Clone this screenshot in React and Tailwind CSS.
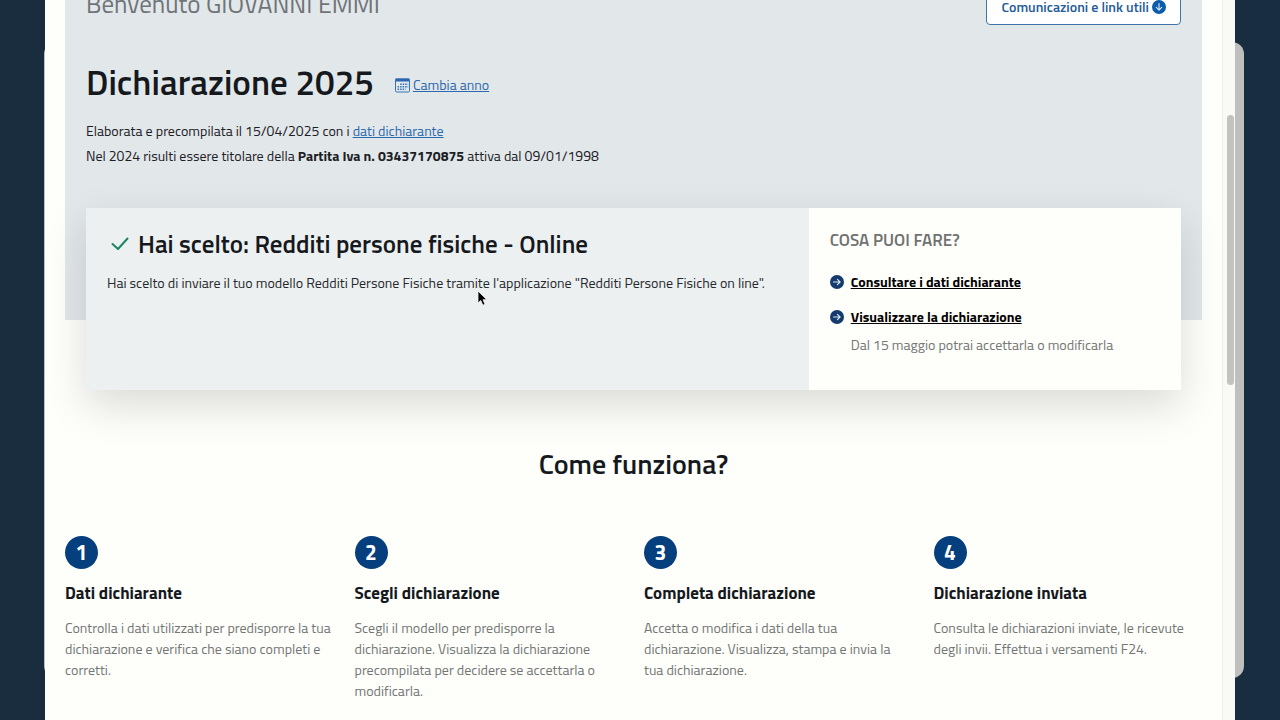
const STEPS = [
  {
    title: "Dati dichiarante",
    text: "Controlla i dati utilizzati per predisporre la tua dichiarazione e verifica che siano completi e corretti.",
  },
  {
    title: "Scegli dichiarazione",
    text: "Scegli il modello per predisporre la dichiarazione. Visualizza la dichiarazione precompilata per decidere se accettarla o modificarla.",
  },
  {
    title: "Completa dichiarazione",
    text: "Accetta o modifica i dati della tua dichiarazione. Visualizza, stampa e invia la tua dichiarazione.",
  },
  {
    title: "Dichiarazione inviata",
    text: "Consulta le dichiarazioni inviate, le ricevute degli invii. Effettua i versamenti F24.",
  },
];

function CircleArrow({ className, down }) {
  return (
    <svg viewBox="0 0 14 14" className={className} aria-hidden="true">
      <circle cx="7" cy="7" r="7" fill="currentColor" />
      <path
        d={down ? "M7 3.5v6.5M4.3 7.4 7 10.1l2.7-2.7" : "M3.5 7H10M7.4 4.3 10.1 7 7.4 9.7"}
        fill="none"
        stroke="#dbe9f7"
        strokeWidth="1.1"
        strokeLinecap="round"
        strokeLinejoin="round"
      />
    </svg>
  );
}

function CalendarIcon() {
  return (
    <svg viewBox="0 0 15 15" className="size-[15px]" aria-hidden="true">
      <rect x="0.5" y="1" width="14" height="13" rx="1.2" fill="none" stroke="#3572b8" />
      <path d="M0.5 0.5h14v3h-14z" fill="#2b66ae" />
      <path
        d="M5.2 6.2h8M2.6 8.7h10.6M2.6 11.2h8"
        stroke="#3572b8"
        strokeWidth="1.4"
        strokeDasharray="1.5 1"
      />
    </svg>
  );
}

function Hero() {
  return (
    <section className="bg-[#e2e7ea] px-[21px] pb-[152px]">
      <div className="flex items-start justify-between">
        <p className="pt-2 text-[25px] leading-8 text-[#6f7479]">Benvenuto GIOVANNI EMMI</p>
        <button
          type="button"
          className="mt-[9px] flex h-9 items-center gap-[3px] rounded border border-[#3f75aa] bg-white px-3.5 text-sm font-semibold text-[#1f5c99]"
        >
          Comunicazioni e link utili
          <CircleArrow down className="size-3.5 text-[#0b5cad]" />
        </button>
      </div>

      <div className="mt-[35px] flex items-center gap-[21px]">
        <h1 className="text-[35px] leading-[44px] font-semibold text-[#15191d]">Dichiarazione 2025</h1>
        <a href="#anno" className="flex items-center gap-[3px] pt-1.5 text-sm text-[#2c68ae]">
          <CalendarIcon />
          <span className="underline">Cambia anno</span>
        </a>
      </div>

      <div className="mt-3.5 text-sm leading-[25px] text-[#1b2025]">
        <p>
          Elaborata e precompilata il 15/04/2025 con i{" "}
          <a href="#dati" className="text-[#2c68ae] underline">
            dati dichiarante
          </a>
        </p>
        <p>
          Nel 2024 risulti essere titolare della <b>Partita Iva n. 03437170875</b> attiva dal 09/01/1998
        </p>
      </div>
    </section>
  );
}

function ChoiceCard() {
  return (
    <section className="relative mx-[21px] -mt-28 flex min-h-[182px] shadow-[0_16px_40px_rgba(0,0,0,0.14)]">
      <div className="flex-1 bg-[#edf0f0] px-[21px] pt-5">
        <h2 className="flex items-center gap-2 pl-[3px] text-[25px] leading-8 font-semibold text-[#15191d]">
          <svg viewBox="0 0 20 20" className="size-5" aria-hidden="true">
            <path
              d="m2.5 10 5.5 5L17.5 4.5"
              fill="none"
              stroke="#1d8460"
              strokeWidth="2"
              strokeLinecap="round"
              strokeLinejoin="round"
            />
          </svg>
          Hai scelto: Redditi persone fisiche - Online
        </h2>
        <p className="mt-3 text-sm leading-[21px] text-[#24292e]">
          Hai scelto di inviare il tuo modello Redditi Persone Fisiche tramite l'applicazione "Redditi Persone
          Fisiche on line".
        </p>
      </div>
      <div className="w-[34%] bg-[#fefefb] px-[21px] pt-5">
        <h3 className="text-[17px] leading-6 font-semibold text-[#6f7270]">COSA PUOI FARE?</h3>
        <ul className="mt-[19px] text-sm leading-[21px]">
          <li className="flex items-center gap-[7px]">
            <CircleArrow className="size-3.5 text-[#143a6e]" />
            <a href="#consulta" className="font-bold text-black underline">
              Consultare i dati dichiarante
            </a>
          </li>
          <li className="mt-3.5 flex items-center gap-[7px]">
            <CircleArrow className="size-3.5 text-[#143a6e]" />
            <a href="#visualizza" className="font-bold text-black underline">
              Visualizzare la dichiarazione
            </a>
          </li>
          <li className="mt-[7px] pl-[21px] text-[#737674]">Dal 15 maggio potrai accettarla o modificarla</li>
        </ul>
      </div>

      {/* mouse pointer */}
      <svg viewBox="0 0 12 18" className="absolute top-[82px] left-[391px] h-[18px] w-3" aria-hidden="true">
        <path
          d="M1 1v12l2.8-2.5 2 4.7 2.2-1-2-4.5h3.8z"
          fill="#000"
          stroke="#f4f4f4"
          strokeWidth="0.8"
        />
      </svg>
    </section>
  );
}

function Step({ number, title, text }) {
  return (
    <li>
      <div className="flex size-[33px] items-center justify-center rounded-full bg-[#063f7d] text-[21px] font-bold text-white">
        {number}
      </div>
      <h3 className="mt-3 text-[17px] leading-6 font-bold text-[#15191d]">{title}</h3>
      <p className="mt-3 text-sm leading-[21px] text-[#737674]">{text}</p>
    </li>
  );
}

export default function App() {
  return (
    <div className="relative h-screen overflow-hidden bg-linear-to-r from-[#192d3f] via-[#14242f] to-[#192d42] px-[45px] font-['Titillium_Web',Roboto,sans-serif]">
      {/* window behind */}
      <div className="absolute inset-y-[42px] right-9 left-11 rounded-xl bg-[#bfbfbd]" />

      <div className="relative flex h-full overflow-hidden bg-[#fefefb]">
        <main className="-mt-5 min-w-0 flex-1 px-5">
          <Hero />
          <ChoiceCard />
          <section>
            <h2 className="mt-14 text-center text-[28px] leading-9 font-semibold text-[#15191d]">
              Come funziona?
            </h2>
            <ol className="mt-[54px] grid grid-cols-4 gap-[21px]">
              {STEPS.map((step, i) => (
                <Step key={step.title} number={i + 1} title={step.title} text={step.text} />
              ))}
            </ol>
          </section>
        </main>

        {/* scrollbar */}
        <div className="flex w-[13px] justify-end border-l border-[#eceeec] bg-[#f9faf8] pt-[115px] pr-px">
          <div className="h-[270px] w-[7px] rounded-full bg-[#c2c3c1]" />
        </div>
      </div>
    </div>
  );
}
